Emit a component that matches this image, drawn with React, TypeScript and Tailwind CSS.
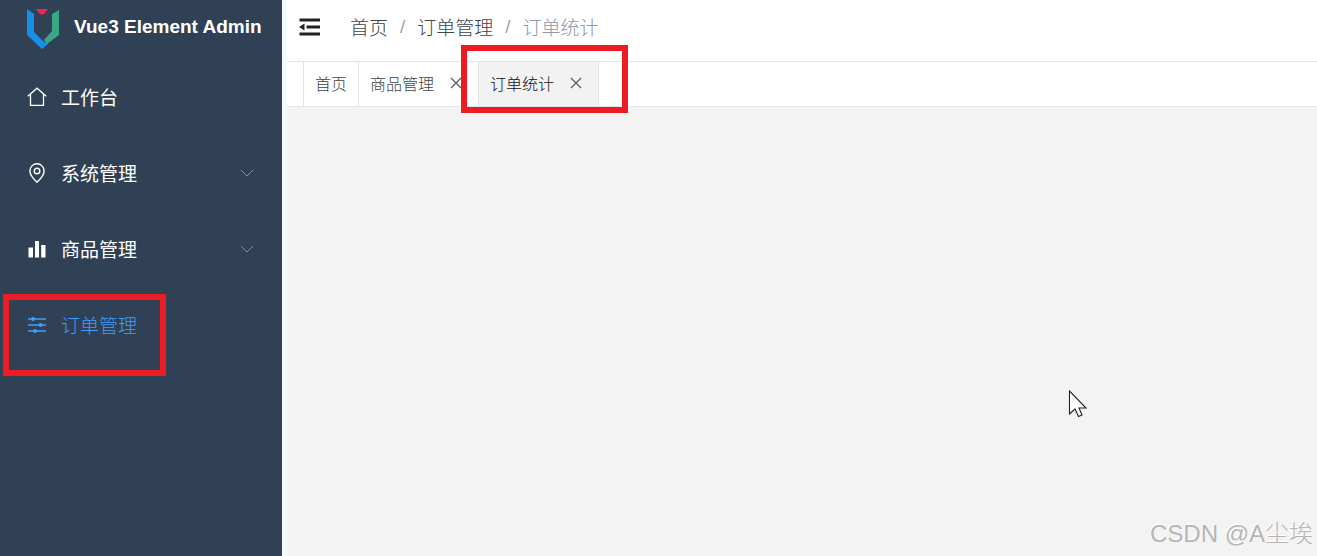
import type { ReactNode } from 'react';
import clsx from 'clsx';

interface MenuItem {
    label: string;
    icon: ReactNode;
    expandable?: boolean;
    active?: boolean;
}

interface TabItem {
    label: string;
    closable?: boolean;
    active?: boolean;
}

function Logo() {
    return (
        <svg viewBox="0 0 34 42" className="h-[42px] w-[34px] shrink-0" aria-hidden="true">
            <path d="M1 2L8 7V25L17 34L22 37L16 42L1 28Z" fill="#1390ea" />
            <path d="M33 3L26 7V24L18 33L21 37L33 28Z" fill="#36a884" />
            <path d="M10 2H22L19 6L16 8L13 6Z" fill="#f52355" />
        </svg>
    );
}

function HomeIcon() {
    return (
        <svg viewBox="0 0 20 20" className="size-5" fill="none" stroke="currentColor" strokeWidth="1.3" aria-hidden="true">
            <path d="M0.8 9.3L10 1.2L19.2 9.3M3.5 7V18.3H16.5V7" />
        </svg>
    );
}

function LocationIcon() {
    return (
        <svg viewBox="0 0 20 20" className="size-5" fill="none" stroke="currentColor" strokeWidth="1.4" aria-hidden="true">
            <path d="M10 19.2C5.2 14.7 2.9 11.4 2.9 7.9A7.1 7.1 0 0 1 17.1 7.9C17.1 11.4 14.8 14.7 10 19.2Z" />
            <circle cx="10" cy="8" r="2.8" />
        </svg>
    );
}

function ChartIcon() {
    return (
        <svg viewBox="0 0 20 20" className="size-5" fill="currentColor" aria-hidden="true">
            <path d="M1.5 8.5H6V18.5H1.5ZM8 2H12V18.5H8ZM14.2 6H18.5V18.5H14.2Z" />
        </svg>
    );
}

function OperationIcon() {
    return (
        <svg viewBox="0 0 20 20" className="size-5" fill="none" stroke="currentColor" strokeWidth="1.3" aria-hidden="true">
            <path d="M1 4H19M1 10H19M1 16H19" />
            <g fill="currentColor" stroke="none">
                <circle cx="6" cy="4" r="2" />
                <circle cx="13.5" cy="10" r="2" />
                <circle cx="8" cy="16" r="2" />
            </g>
        </svg>
    );
}

function ChevronIcon() {
    return (
        <svg viewBox="0 0 14 14" className="size-[14px] text-[#8592a3]" fill="none" stroke="currentColor" aria-hidden="true">
            <path d="M1 4L7 10L13 4" />
        </svg>
    );
}

function FoldIcon() {
    return (
        <svg viewBox="0 0 22 18" className="h-[18px] w-[22px]" fill="currentColor" aria-hidden="true">
            <path d="M0.5 0.5H21V3.5H0.5ZM7.5 7.5H21V10.5H7.5ZM0.5 14.5H21V17.5H0.5ZM0 9L5.5 5.5V12.5Z" />
        </svg>
    );
}

function CloseIcon() {
    return (
        <svg viewBox="0 0 12 12" className="size-3" fill="none" stroke="currentColor" strokeWidth="1.1" aria-hidden="true">
            <path d="M1 1L11 11M11 1L1 11" />
        </svg>
    );
}

const menu: MenuItem[] = [
    { label: '工作台', icon: <HomeIcon /> },
    { label: '系统管理', icon: <LocationIcon />, expandable: true },
    { label: '商品管理', icon: <ChartIcon />, expandable: true },
    { label: '订单管理', icon: <OperationIcon />, active: true },
];

const tabs: TabItem[] = [
    { label: '首页' },
    { label: '商品管理', closable: true },
    { label: '订单统计', closable: true, active: true },
];

function Sidebar() {
    return (
        <aside className="w-[282px] shrink-0 bg-[#304156] text-white">
            <div className="flex h-14 items-center gap-[14px] pl-[26px]">
                <Logo />
                <h1 className="pb-[2px] font-['Liberation_Sans',sans-serif] text-[19px] font-bold whitespace-nowrap">
                    Vue3 Element Admin
                </h1>
            </div>
            <nav className="pt-[3px]">
                {menu.map((item) => (
                    <div key={item.label} className="relative">
                        <button
                            type="button"
                            className={clsx(
                                'flex h-[76px] w-full items-center gap-[14px] pr-7 pl-[27px] text-[19px]',
                                item.active ? 'text-[#409eff]' : 'font-normal'
                            )}
                        >
                            {item.icon}
                            <span className="flex-1 text-left">{item.label}</span>
                            {item.expandable && <ChevronIcon />}
                        </button>
                        {item.active && (
                            <div className="pointer-events-none absolute top-[7px] left-[3px] h-[82px] w-[163px] border-6 border-[#ed1c24]" />
                        )}
                    </div>
                ))}
            </nav>
        </aside>
    );
}

function Breadcrumb() {
    return (
        <nav className="flex items-center gap-3 text-[19px] text-[#404348]" aria-label="breadcrumb">
            <a href="#home">首页</a>
            <span className="font-['Liberation_Sans',sans-serif] text-[#a0a4ab]">/</span>
            <a href="#order">订单管理</a>
            <span className="font-['Liberation_Sans',sans-serif] text-[#a0a4ab]">/</span>
            <span className="text-[#8d97a8]">订单统计</span>
        </nav>
    );
}

function TabsBar() {
    return (
        <div className="flex h-[46px] border-y border-[#e4e5e7] bg-white pl-4 text-[16px] text-[#404348]">
            {tabs.map((tab) => (
                <div
                    key={tab.label}
                    className={clsx(
                        'relative flex items-center gap-4 border-l border-[#e4e5e7] pb-[2px] pl-[11px]',
                        tab.closable ? 'pr-4' : 'pr-[11px]',
                        tab.active && 'border-r bg-[#f2f2f2] text-[#111]'
                    )}
                >
                    <a href={`#${tab.label}`}>{tab.label}</a>
                    {tab.closable && (
                        <button type="button" aria-label={`关闭${tab.label}`} className="text-[#555]">
                            <CloseIcon />
                        </button>
                    )}
                    {tab.active && (
                        <div className="pointer-events-none absolute -top-[17px] -left-[18px] h-[68px] w-[167px] border-6 border-[#ed1c24]" />
                    )}
                </div>
            ))}
        </div>
    );
}

function Cursor() {
    return (
        <svg viewBox="0 0 20 28" className="absolute top-[390px] left-[1068px] h-7 w-5" aria-hidden="true">
            <path d="M1.5 1V24L7 19L10.5 26.5L14 25L11 18H18Z" fill="white" stroke="#222" strokeWidth="1.1" />
        </svg>
    );
}

export default function App() {
    return (
        <div className="relative flex min-h-screen bg-white font-['Noto_Sans_CJK_SC',sans-serif] font-light">
            <Sidebar />
            <div className="flex min-w-0 flex-1 flex-col bg-[#f3f9fe] pl-[5px]">
                <header className="flex h-[61px] items-center gap-[29px] bg-white pb-[7px] pl-3">
                    <button type="button" aria-label="折叠菜单" className="text-[#222]">
                        <FoldIcon />
                    </button>
                    <Breadcrumb />
                </header>
                <TabsBar />
                <main className="flex-1 bg-[#f3f3f3]" />
            </div>
            <Cursor />
            <p className="absolute right-1 bottom-1 font-['Liberation_Sans','Noto_Sans_CJK_SC',sans-serif] text-[24px] text-[#b5b5b5] [text-shadow:-1px_-1px_0_#fff]">
                CSDN @A尘埃
            </p>
        </div>
    );
}
